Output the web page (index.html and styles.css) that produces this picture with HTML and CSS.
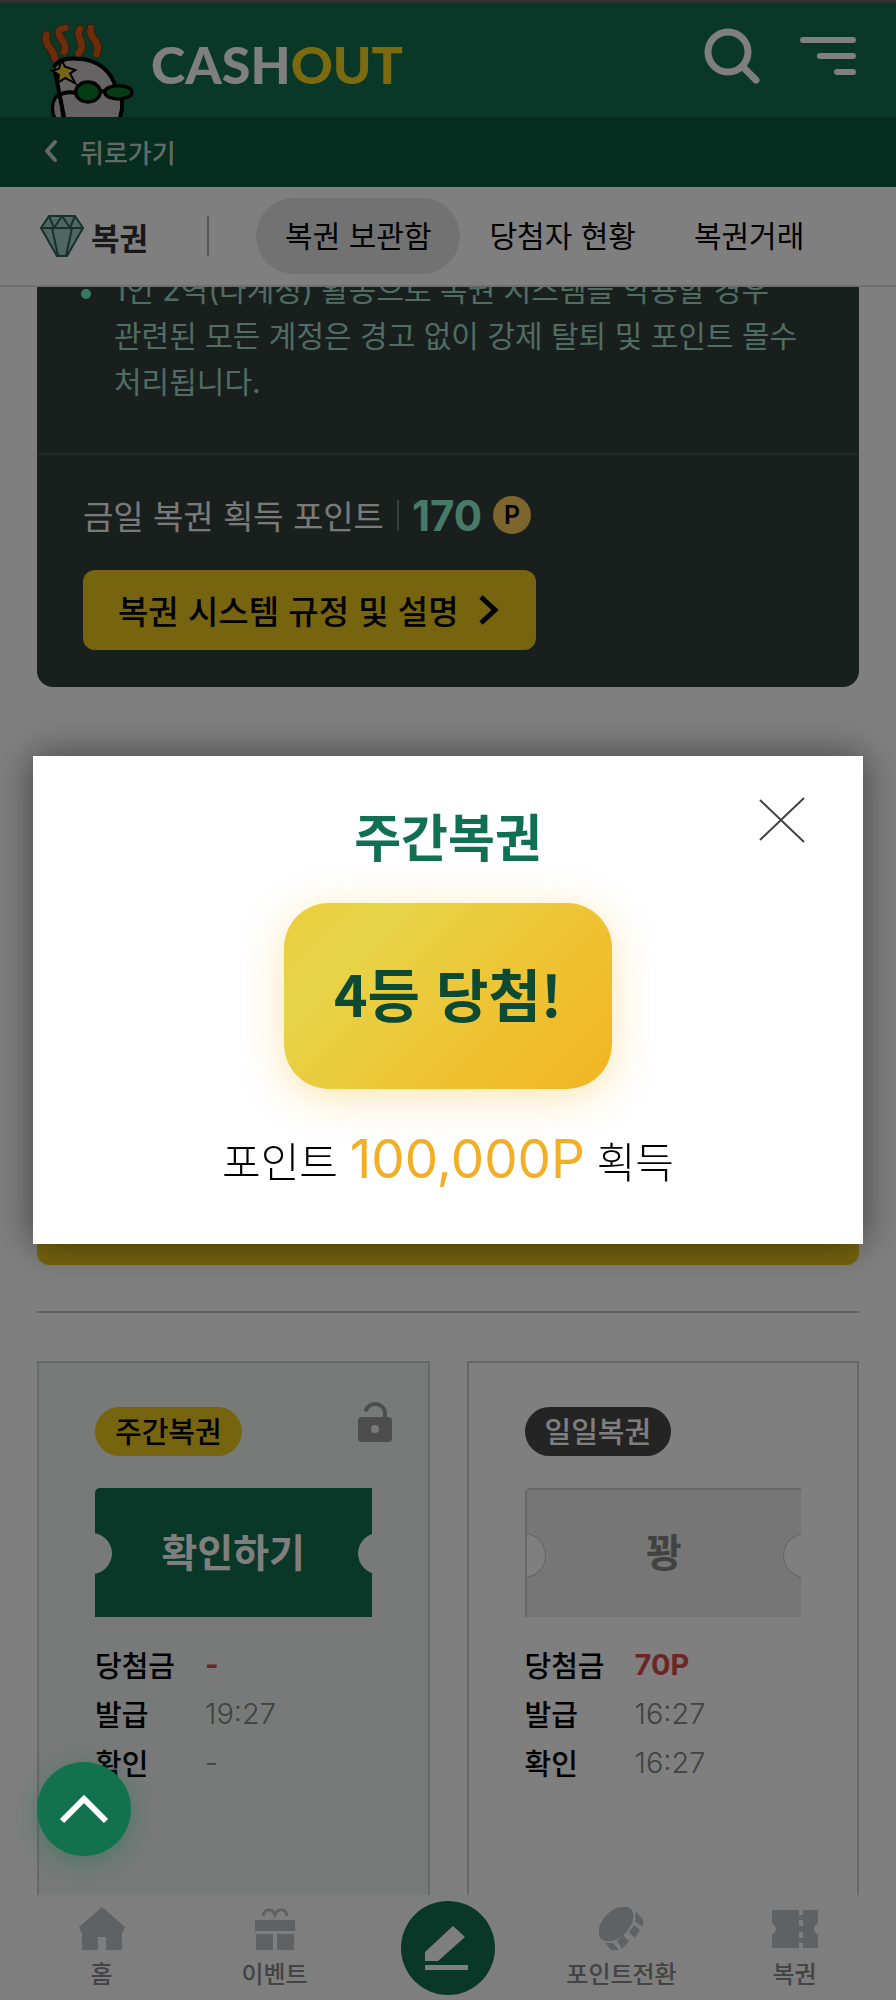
FILE: index.html
```html
<!DOCTYPE html>
<html lang="ko">
<head>
<meta charset="utf-8">
<meta name="viewport" content="width=device-width, initial-scale=1">
<title>CASHOUT 복권 보관함</title>
<link rel="stylesheet" href="styles.css">
</head>
<body>
<div class="app">
  <header class="header">
    <a class="brand" href="#">
      <svg class="brand-mascot" viewBox="30 36 282 285" aria-hidden="true">
        <g fill="none" stroke-linecap="round" stroke-linejoin="round">
          <g stroke="#70300c" stroke-width="25">
            <path d="M49 74C42 112 72 112 74 146"/><path d="M106 54C68 60 94 84 102 100Q108 116 102 126"/><path d="M150 56C138 76 152 84 155 104Q156 122 145 130"/><path d="M182 54C176 82 202 88 204 112L200 132"/>
          </g>
          <g stroke="#d85a14" stroke-width="20">
            <path d="M49 74C42 112 72 112 74 146"/><path d="M106 54C68 60 94 84 102 100Q108 116 102 126"/><path d="M150 56C138 76 152 84 155 104Q156 122 145 130"/><path d="M182 54C176 82 202 88 204 112L200 132"/>
          </g>
        </g>
        <path d="M90 252C66 262 60 304 78 330L100 330Z" fill="#c0bcbc" stroke="#000" stroke-width="10"/>
        <path d="M104 330L74 180Q84 158 122 146C190 138 248 184 258 240L276 262V330Z" fill="#cbc6c8"/>
        <path d="M104 330L74 180M70 172C84 150 112 144 140 146C208 146 246 190 258 234M276 264V298L268 330M80 260Q104 242 136 248M214 244H226" fill="none" stroke="#000" stroke-width="12"/>
        <path d="M94 150L105 170L136 180L120 190L136 220L106 204L84 218L87 194L66 182L87 176Z" fill="#e8cc28" stroke="#000" stroke-width="6"/>
        <ellipse cx="174" cy="246" rx="37" ry="30" fill="#087a28" stroke="#000" stroke-width="10"/>
        <ellipse cx="265" cy="247" rx="41" ry="20" fill="#087a28" stroke="#000" stroke-width="10"/>
      </svg>
      <span class="brand-name">CASH<span class="brand-accent">OUT</span></span>
    </a>
    <div class="header-actions">
      <button class="icon-button" type="button" aria-label="검색">
        <svg width="58" height="58" viewBox="0 0 58 58" fill="none" stroke="#fff" stroke-linecap="round"><circle cx="25" cy="25" r="20" stroke-width="7"/><path d="M40 40L53 53" stroke-width="7"/></svg>
      </button>
      <button class="icon-button" type="button" aria-label="메뉴">
        <svg width="56" height="40" viewBox="0 0 56 40" fill="none" stroke="#fff" stroke-width="6" stroke-linecap="round"><path d="M3 4H53M20 20H53M37 36H53"/></svg>
      </button>
    </div>
  </header>
  <a class="back" href="#">
    <svg width="14" height="24" viewBox="0 0 14 24" fill="none" stroke="currentColor" stroke-width="4" stroke-linecap="round" stroke-linejoin="round"><path d="M11 3L3 12L11 21"/></svg>
    뒤로가기
  </a>
  <nav class="tabs" aria-label="복권">
    <h1 class="tabs-title">
      <svg width="44" height="44" viewBox="0 0 44 44" aria-hidden="true"><path d="M9 2H35L43 14L27 42H17L1 14Z" fill="#a0ccc0" stroke="#2e6254" stroke-width="2" stroke-linejoin="round"/><path d="M1 14H43M12 14L18 42M32 14L26 42M9 2L14 14L22 2L30 14L35 2" fill="none" stroke="#2e6254" stroke-width="2"/></svg>
      복권
    </h1>
    <span class="tabs-divider"></span>
    <a class="tab tab-active" href="#">복권 보관함</a>
    <a class="tab" href="#">당첨자 현황</a>
    <a class="tab" href="#">복권거래</a>
  </nav>
  <main class="main">
    <section class="notice">
      <ul class="notice-list">
        <li>1인 2역(다계정) 활동으로 복권 시스템을 악용할 경우 관련된 모든 계정은 경고 없이 강제 탈퇴 및 포인트 몰수 처리됩니다.</li>
      </ul>
      <div class="notice-foot">
        <p class="today">금일 복권 획득 포인트 <span class="today-divider"></span><strong class="today-value">170</strong><span class="coin">P</span></p>
        <a class="rules" href="#">복권 시스템 규정 및 설명
          <svg width="20" height="32" viewBox="0 0 20 32" fill="none" stroke="#000" stroke-width="5"><path d="M2 3L16 16L2 29"/></svg>
        </a>
      </div>
    </section>
    <div class="banner"></div>
    <hr class="rule">
    <div class="cards">
      <article class="card card-open">
        <div class="card-top">
          <span class="badge badge-week">주간복권</span>
          <svg class="lock" width="34" height="42" viewBox="0 0 34 42" aria-label="열림"><path d="M8 10A10 10 0 0 1 27 12V20" fill="none" stroke="#9a9a9a" stroke-width="4" stroke-linecap="round"/><path d="M4 17H30Q34 17 34 21V38Q34 42 30 42H4Q0 42 0 38V21Q0 17 4 17ZM17 25A4 4 0 1 0 17 33A4 4 0 1 0 17 25Z" fill="#9a9a9a"/></svg>
        </div>
        <button class="ticket ticket-green" type="button">확인하기</button>
        <dl class="facts">
          <dt>당첨금</dt><dd class="prize">-</dd>
          <dt>발급</dt><dd>19:27</dd>
          <dt>확인</dt><dd>-</dd>
        </dl>
      </article>
      <article class="card">
        <div class="card-top">
          <span class="badge badge-day">일일복권</span>
        </div>
        <div class="ticket ticket-grey">꽝</div>
        <dl class="facts">
          <dt>당첨금</dt><dd class="prize">70P</dd>
          <dt>발급</dt><dd>16:27</dd>
          <dt>확인</dt><dd>16:27</dd>
        </dl>
      </article>
    </div>
  </main>
  <nav class="bottom" aria-label="하단 메뉴">
    <a class="bottom-item" href="#">
      <svg width="46" height="44" viewBox="0 0 46 44" fill="currentColor"><path d="M23 0L46 20L44 25H43V43H27V30H19V43H3V25H2L0 20Z"/></svg>홈
    </a>
    <a class="bottom-item" href="#">
      <svg width="46" height="44" viewBox="0 0 46 44"><path d="M11 9C13 1 20 1 23 8C26 1 34 1 35 9" fill="none" stroke="currentColor" stroke-width="3"/><path d="M3 13H43V24H3ZM4 27H21V43H4ZM25 27H42V43H25Z" fill="currentColor"/></svg>이벤트
    </a>
    <a class="write" href="#" aria-label="글쓰기">
      <svg width="46" height="46" viewBox="0 0 46 46" fill="#fff"><path d="M0 36V27L28 1L40 12L13 36ZM0 40H43V45H0Z"/></svg>
    </a>
    <a class="bottom-item" href="#">
      <svg width="46" height="44" viewBox="0 0 46 44" fill="currentColor"><ellipse cx="17" cy="17" rx="21" ry="13" transform="rotate(-45 17 17)"/><path d="M37 4L44 13V20L36 14ZM35 18L41 23L36 31L30 25ZM24 28L30 34L23 42L18 34ZM6 36L14 36L20 43L12 43Z"/></svg>포인트전환
    </a>
    <a class="bottom-item" href="#">
      <svg width="46" height="44" viewBox="0 0 46 44" fill="currentColor"><path d="M0 3H27V8H31V3H46V16Q38 22 46 28V41H31V36H27V41H0V28Q8 22 0 16ZM27 13V19H31V13ZM27 25V31H31V25Z" fill-rule="evenodd"/></svg>복권
    </a>
  </nav>
</div>

<div class="overlay">
  <section class="modal" role="dialog" aria-modal="true" aria-labelledby="modal-title">
    <button class="modal-close" type="button" aria-label="닫기">
      <svg width="46" height="46" viewBox="0 0 46 46" fill="none" stroke="#444" stroke-width="2"><path d="M1 3L45 45M45 1L1 43"/></svg>
    </button>
    <h2 class="modal-title" id="modal-title">주간복권</h2>
    <p class="result">4등 당첨!</p>
    <p class="reward">포인트 <span class="reward-value">100,000P</span> 획득</p>
  </section>
</div>
<button class="to-top" type="button" aria-label="맨 위로">
  <svg width="50" height="30" viewBox="0 0 50 30" fill="none" stroke="#fff" stroke-width="6"><path d="M3 27L25 5L47 27"/></svg>
</button>
</body>
</html>
```
FILE: styles.css
```css
* { box-sizing: border-box; }
body, h1, h2, p, ul, dl, dd { margin: 0; padding: 0; }
body {
  font-family: "Noto Sans CJK KR", sans-serif;
  font-size: 31px;
  color: #000;
  background: #fff;
}
a { color: inherit; text-decoration: none; }
button { border: 0; padding: 0; font: inherit; background: none; cursor: pointer; }
svg { display: block; flex: none; }

.app { display: flex; flex-direction: column; min-height: 100vh; border-top: 3px solid #606060; }

.header {
  display: flex; justify-content: space-between; align-items: flex-end;
  height: 114px; padding: 0 40px; background: #127052;
}
.brand { display: flex; align-items: flex-end; gap: 17px; }
.brand-mascot { width: 94px; height: 95px; }
.brand-name { font: 900 52px/1 Lato, sans-serif; color: #fff; padding-bottom: 27px; }
.brand-accent { color: #f8d41c; }
.header-actions { display: flex; align-items: center; gap: 39px; padding-bottom: 32px; }
.icon-button { display: block; }

.back {
  display: flex; align-items: center; gap: 22px; height: 70px; padding: 0 44px 2px;
  background: #0e5a42; color: #c4d4cc; font-size: 26px; font-weight: 500;
}

.tabs {
  display: flex; align-items: center; height: 100px; padding: 0 40px;
  border-bottom: 2px solid #e0e0e0; white-space: nowrap;
}
.tabs-title { display: flex; align-items: center; gap: 7px; font-size: 31px; font-weight: 700; color: #333; }
.tabs-divider { width: 2px; height: 40px; margin: 0 47px 0 59px; background: #b0b0b0; }
.tab { padding: 0 29px; border-radius: 38px; font-family: Inter, "Noto Sans CJK KR", sans-serif; font-size: 30px; line-height: 76px; }
.tab-active { background: #e4e4e4; }

.main { flex: 1; display: flex; flex-direction: column; padding: 0 37px; overflow: hidden; }
.notice { background: #323f3a; border-radius: 0 0 16px 16px; overflow: hidden; }
.notice-list {
  margin-top: -20px; padding: 0 30px 48px 77px; list-style: none;
  font-family: Inter, "Noto Sans CJK KR", sans-serif;
  font-size: 30px; line-height: 46px; color: #a0d8c6; word-break: keep-all;
}
.notice-list li { position: relative; }
.notice-list li::before {
  content: ""; position: absolute; left: -33px; top: 22px;
  width: 10px; height: 10px; border-radius: 50%; background: #64f4c8;
}
.notice-foot { padding: 34px 46px 37px; border-top: 2px solid #424e49; }
.today { display: flex; align-items: center; height: 52px; font-size: 33px; color: #f4f4f4; }
.today-divider { width: 2px; height: 30px; margin: 0 13px; background: #767d7a; }
.today-value { font-family: Inter, sans-serif; font-size: 42px; font-weight: 700; color: #90f4d4; }
.coin {
  width: 38px; height: 38px; margin-left: 11px; border-radius: 50%;
  background: #f8cc5c; color: #000; font: 600 25px/38px Inter, sans-serif; text-align: center;
}
.rules {
  display: inline-flex; align-items: center; gap: 20px; height: 80px; margin-top: 29px; padding: 0 37px 0 35px;
  border-radius: 12px; background: #eec81c; font-size: 33px; font-weight: 500;
}
.banner { height: 80px; margin-top: 498px; border-radius: 12px; background: #eec81c; }
.rule { width: 100%; margin: 46px 0 48px; border: 0; border-top: 2px solid #c4c4c4; }

.cards { flex: 1; display: grid; grid-template-columns: 1fr 1fr; gap: 37px; }
.card { padding: 44px 56px 80px; border: 2px solid #d0d0d0; border-bottom: 0; }
.card-open { background: #f0f4f2; }
.card-top { display: flex; justify-content: space-between; align-items: flex-start; }
.badge { padding: 0 20px 2px; border-radius: 25px; font-size: 29px; font-weight: 500; line-height: 47px; }
.badge-week { background: #eec81c; }
.badge-day { background: #484848; color: #fff; }
.lock { margin: -7px -20px 0 0; }
.ticket {
  position: relative; display: block; width: 100%; height: 129px; margin-top: 32px; padding-bottom: 4px; overflow: hidden;
  border-radius: 5px 0 0 0; font-size: 39px; font-weight: 700; line-height: 125px; text-align: center;
}
.ticket::before, .ticket::after {
  content: ""; position: absolute; top: 45px; width: 41px; height: 41px; border-radius: 50%; background: #f0f4f2;
}
.ticket::before { left: -24px; }
.ticket::after { right: -27px; }
.ticket-green { background: #127052; color: #fff; }
.ticket-grey { background: #ececec; color: #848484; border: 2px solid #d0d0d0; border-width: 2px 0 0 2px; line-height: 121px; }
.ticket-grey::before, .ticket-grey::after { top: 43px; width: 43px; height: 43px; background: #fff; border: 1px solid #c4c4c4; }
.ticket-grey::before { left: -26px; }
.facts {
  display: grid; grid-template-columns: 80px 1fr; column-gap: 30px; margin-top: 23px;
  font-size: 29px; line-height: 49px;
}
.facts dt { font-weight: 500; white-space: nowrap; }
.facts dd { font-family: Inter, sans-serif; color: #848484; font-weight: 300; }
.facts .prize { color: #d84c4c; font-weight: 700; }

.bottom { display: flex; align-items: center; height: 105px; padding: 0 15px; background: #fcfcfc; }
.bottom-item {
  flex: 1; display: flex; flex-direction: column; align-items: center; gap: 4px; padding-top: 2px;
  font-size: 24px; font-weight: 500; line-height: 36px; color: #88888a; white-space: nowrap;
}
.bottom-item svg { color: #c0c2c4; }
.write {
  display: flex; align-items: center; justify-content: center; width: 94px; height: 94px; margin: 0 40px;
  border-radius: 50%; background: #127052;
}

.overlay {
  position: fixed; inset: 0; display: flex; align-items: center; padding: 0 33px;
  background: rgba(0, 0, 0, .5);
}
.modal {
  position: relative; flex: 1; display: flex; flex-direction: column; align-items: center;
  padding: 44px 0 47px; background: #fff; box-shadow: 0 0 36px rgba(0, 0, 0, .5);
}
.modal-close { position: absolute; top: 41px; right: 58px; }
.modal-title { font-size: 51px; font-weight: 700; line-height: 70px; color: #127052; }
.result {
  margin-top: 33px; padding: 0 50px 8px; border-radius: 45px;
  background: linear-gradient(135deg, #eccb3c 0%, #e6d548 20%, #eec434 60%, #f2b422 100%);
  box-shadow: 0 8px 40px rgba(244, 180, 36, .35);
  font-size: 57px; font-weight: 700; line-height: 178px; color: #0c4a34; white-space: nowrap;
}
.reward { margin-top: 33px; font-size: 42px; font-weight: 300; line-height: 74px; white-space: nowrap; }
.reward-value { font-family: Inter, sans-serif; font-size: 53px; font-weight: 400; color: #f2ae24; }

.to-top {
  position: fixed; left: 37px; bottom: 144px; width: 94px; height: 94px; border-radius: 50%;
  display: flex; align-items: center; justify-content: center;
  background: #127250; box-shadow: 0 6px 28px rgba(18, 114, 80, .45);
}
```
